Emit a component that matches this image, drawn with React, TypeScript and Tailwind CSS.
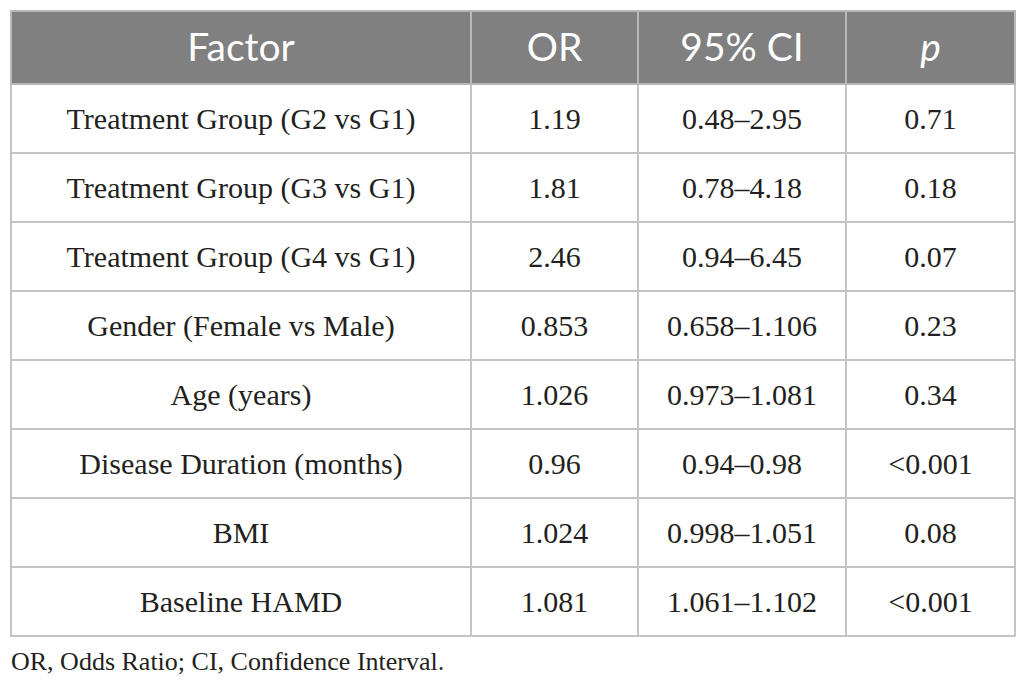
const rows = [
  ["Treatment Group (G2 vs G1)", "1.19", "0.48–2.95", "0.71"],
  ["Treatment Group (G3 vs G1)", "1.81", "0.78–4.18", "0.18"],
  ["Treatment Group (G4 vs G1)", "2.46", "0.94–6.45", "0.07"],
  ["Gender (Female vs Male)", "0.853", "0.658–1.106", "0.23"],
  ["Age (years)", "1.026", "0.973–1.081", "0.34"],
  ["Disease Duration (months)", "0.96", "0.94–0.98", "<0.001"],
  ["BMI", "1.024", "0.998–1.051", "0.08"],
  ["Baseline HAMD", "1.081", "1.061–1.102", "<0.001"],
];

export default function App() {
  return (
    <div className="w-[1026px] h-[688px] bg-white pl-[10px] pt-[10px] overflow-hidden">
      <table className="w-[1004px] table-fixed border-collapse border-2 border-[#c4c4c4]">
        <colgroup>
          <col className="w-[460px]" />
          <col className="w-[167px]" />
          <col className="w-[208px]" />
          <col className="w-[169px]" />
        </colgroup>
        <thead>
          <tr className="h-[73px] bg-[#808080] text-white text-[39px] font-['Lato','Open_Sans',sans-serif]">
            <th className="font-normal border-2 border-[#b8b8b8] pb-[2px]">Factor</th>
            <th className="font-normal border-2 border-[#b8b8b8] pb-[2px]">OR</th>
            <th className="font-normal border-2 border-[#b8b8b8] pb-[2px]">95% CI</th>
            <th className="font-normal italic border-2 border-[#b8b8b8] pb-[2px]">p</th>
          </tr>
        </thead>
        <tbody className="font-['Liberation_Serif',serif] text-[30px] text-[#231f20]">
          {rows.map((r) => (
            <tr key={r[0]} className="h-[69px]">
              {r.map((c, i) => (
                <td key={i} className="text-center border-2 border-[#c4c4c4]">
                  {c}
                </td>
              ))}
            </tr>
          ))}
        </tbody>
      </table>
      <p className="mt-[5px] pl-[1px] font-['Liberation_Serif',serif] text-[26px] text-[#231f20]">
        OR, Odds Ratio; CI, Confidence Interval.
      </p>
    </div>
  );
}
